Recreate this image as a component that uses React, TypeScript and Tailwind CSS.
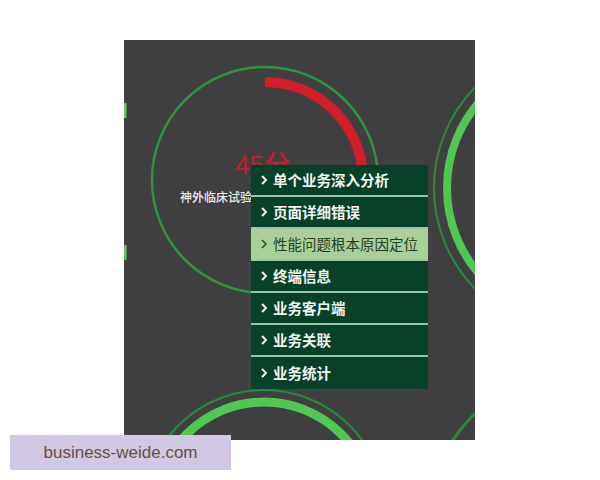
import { useState } from "react";

const items = [
  "单个业务深入分析",
  "页面详细错误",
  "性能问题根本原因定位",
  "终端信息",
  "业务客户端",
  "业务关联",
  "业务统计",
];

function Gauges() {
  return (
    <svg className="absolute inset-0" width={351} height={400} viewBox="0 0 351 400">
      {/* left neighbour, just the edge */}
      <rect x={0} y={63} width={2.5} height={15} fill="#5fc862" />
      <rect x={0} y={205} width={2.5} height={15} fill="#5fc862" />
      {/* main gauge */}
      <circle cx={141} cy={140} r={113} fill="none" stroke="#2c973b" strokeWidth={2.5} />
      <circle
        cx={141}
        cy={140}
        r={98}
        fill="none"
        stroke="#d01f28"
        strokeWidth={10}
        strokeDasharray={`${2 * Math.PI * 98 * 0.45} ${2 * Math.PI * 98}`}
        transform="rotate(-90 141 140)"
      />
      {/* right gauge */}
      <circle cx={454} cy={148} r={144} fill="none" stroke="#2a8c39" strokeWidth={2} />
      <circle cx={454} cy={148} r={131} fill="none" stroke="#4fc751" strokeWidth={8} />
      {/* bottom gauge */}
      <circle cx={140} cy={471} r={121} fill="none" stroke="#2a8c39" strokeWidth={2} />
      <circle cx={140} cy={471} r={109} fill="none" stroke="#4fc751" strokeWidth={9} />
      {/* bottom right */}
      <circle cx={451} cy={480} r={146} fill="none" stroke="#2b8a3a" strokeWidth={3} />
    </svg>
  );
}

export default function App() {
  const [active, setActive] = useState(2);

  return (
    <div className="relative w-[600px] h-[480px] bg-white pt-[40px] pl-[124px]">
      <div className="relative w-[351px] h-[400px] bg-[#403f42] overflow-hidden">
        <Gauges />

        <div className="absolute left-[111px] top-[112px] text-[26px] leading-none text-[#c81e29] font-medium font-['Liberation_Sans','Noto_Sans_CJK_SC',sans-serif]">
          45分
        </div>
        <div className="absolute left-[56px] top-[151px] text-[12px] leading-none text-[#eeeeee] font-medium font-['Noto_Sans_CJK_SC',sans-serif] whitespace-nowrap">
          神外临床试验系统
        </div>

        {/* context menu */}
        <ul className="absolute left-[127px] top-[125px] w-[177px] bg-[#08412a] font-['Noto_Sans_CJK_SC','Liberation_Sans',sans-serif]">
          {items.map((label, i) => (
            <li
              key={label}
              onMouseEnter={() => setActive(i)}
              className={`flex items-center gap-[6px] h-[32px] pl-[10px] text-[14.5px] leading-none whitespace-nowrap ${
                i < items.length - 1 ? "border-b-2 border-[#9cc4ab]" : ""
              } ${i === active ? "bg-[#a9d09b] text-[#1f3f26]" : "text-[#f1f4f1] font-bold"}`}
            >
              <svg width={6} height={10} viewBox="0 0 6 10" className="shrink-0">
                <polyline
                  points="1,1 5,5 1,9"
                  fill="none"
                  stroke="currentColor"
                  strokeWidth={i === active ? 1.4 : 2}
                />
              </svg>
              {label}
            </li>
          ))}
        </ul>
      </div>

      {/* watermark */}
      <div className="absolute left-[10px] top-[435px] w-[221px] h-[35px] flex items-center justify-center bg-[#d3c8e4] text-[#6a4f3e] text-[17px] font-['Liberation_Sans',sans-serif]">
        business-weide.com
      </div>
    </div>
  );
}
